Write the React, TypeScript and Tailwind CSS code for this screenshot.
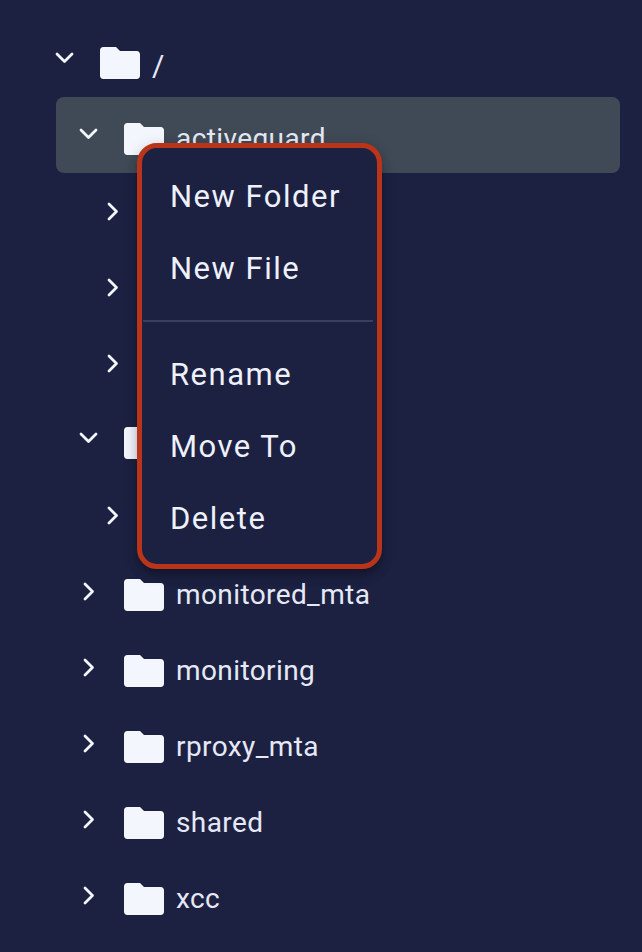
import * as React from "react"

interface TreeRow {
  name: string
  level: number
  open?: boolean
  active?: boolean
}

const ROWS: TreeRow[] = [
  { name: "/", level: 0, open: true },
  { name: "activeguard", level: 1, open: true, active: true },
  { name: "", level: 2 },
  { name: "", level: 2 },
  { name: "", level: 2 },
  { name: "", level: 1, open: true },
  { name: "", level: 2 },
  { name: "monitored_mta", level: 1 },
  { name: "monitoring", level: 1 },
  { name: "rproxy_mta", level: 1 },
  { name: "shared", level: 1 },
  { name: "xcc", level: 1 },
]

const INDENTS = ["pl-0", "pl-6", "pl-12"]

const Chevron = ({ open }: { open?: boolean }) => (
  <div className="w-4 flex justify-center shrink-0">
    {open ? (
      <svg width="19" height="12" viewBox="0 0 19 12" fill="none" className="shrink-0 -translate-y-px">
        <path d="M2 2 9.500 9.500 17 2" stroke="#f4f6fe" strokeWidth="2.8" strokeLinecap="round" strokeLinejoin="round" />
      </svg>
    ) : (
      <svg width="12" height="19" viewBox="0 0 12 19" fill="none" className="shrink-0 translate-x-px">
        <path d="M2 2 9.500 9.500 2 17" stroke="#f4f6fe" strokeWidth="2.8" strokeLinecap="round" strokeLinejoin="round" />
      </svg>
    )}
  </div>
)

const Folder = () => (
  <svg width="40" height="32" viewBox="2 4 20 16" className="ml-7 mt-2 shrink-0">
    <path
      fill="#f4f6fe"
      d="M10 4H3.6C2.7 4 2 4.7 2 5.600V18.400C2 19.300 2.700 20 3.600 20H20.400C21.300 20 22 19.300 22 18.400V7.600C22 6.700 21.300 6 20.400 6H12l-2-2z"
    />
  </svg>
)

const MenuItem = ({ label }: { label: string }) => (
  <div className="h-[72px] flex items-center pt-0.5 pl-7 text-[31px] tracking-[1.5px] text-[#eef0fa]">
    {label}
  </div>
)

export default function App() {
  return (
    <div className="relative w-[642px] h-[952px] overflow-hidden bg-[#1c2142] font-['Roboto',sans-serif]">
      {/* Tree */}
      <div className="pt-[21px] pl-14 pr-[22px] flex flex-col">
        {ROWS.map((row, i) => (
          <div
            key={i}
            className={`h-[76px] rounded-lg flex items-center ${row.active ? "bg-[#3f4a56]" : ""}`}
          >
            <div className={`flex items-center ${INDENTS[row.level]}`}>
              <Chevron open={row.open} />
              <Folder />
              <span
                className={`ml-3 tracking-[0.4px] text-[#e6e9f5] ${
                  row.level === 0 ? "mt-3 text-[30px]" : "mt-2 text-[28px]"
                }`}
              >
                {row.name}
              </span>
            </div>
          </div>
        ))}
      </div>

      {/* Context menu */}
      <div className="absolute left-[137px] top-[143px] w-[245px] rounded-[20px] border-[5px] border-[#b93419] bg-[#1c2142] pt-3 pb-2.5 shadow-[0_5px_5px_-3px_rgba(0,0,0,0.2),0_8px_10px_1px_rgba(0,0,0,0.14),0_3px_14px_2px_rgba(0,0,0,0.12)]">
        <MenuItem label="New Folder" />
        <MenuItem label="New File" />
        <div className="my-4 ml-px mr-[4px] h-0.5 bg-[#3a3f5c]" />
        <MenuItem label="Rename" />
        <MenuItem label="Move To" />
        <MenuItem label="Delete" />
      </div>
    </div>
  )
}
